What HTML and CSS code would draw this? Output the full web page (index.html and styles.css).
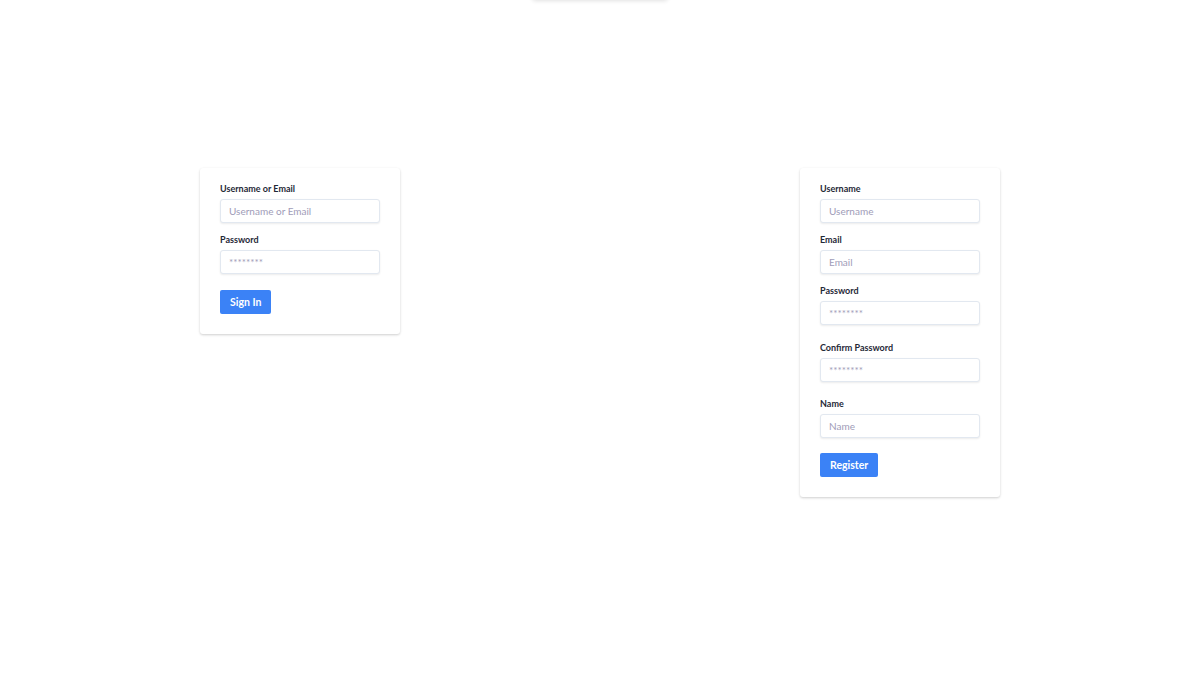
FILE: index.html
```html
<!DOCTYPE html>
<html lang="en">
<head>
<meta charset="utf-8">
<title>Auth</title>
<link rel="stylesheet" href="styles.css">
</head>
<body>
<div class="toast"></div>
<main class="forms">
  <form class="card">
    <div class="field">
      <label class="label">Username or Email</label>
      <input class="input" type="text" placeholder="Username or Email">
    </div>
    <div class="field field-last">
      <label class="label">Password</label>
      <input class="input" type="password" placeholder="********">
    </div>
    <button class="btn" type="button">Sign In</button>
  </form>
  <form class="card">
    <div class="field">
      <label class="label">Username</label>
      <input class="input" type="text" placeholder="Username">
    </div>
    <div class="field">
      <label class="label">Email</label>
      <input class="input" type="text" placeholder="Email">
    </div>
    <div class="field field-last">
      <label class="label">Password</label>
      <input class="input" type="password" placeholder="********">
    </div>
    <div class="field field-spaced">
      <label class="label">Confirm Password</label>
      <input class="input" type="password" placeholder="********">
    </div>
    <div class="field field-spaced">
      <label class="label">Name</label>
      <input class="input" type="text" placeholder="Name">
    </div>
    <button class="btn" type="button">Register</button>
  </form>
</main>
</body>
</html>
```
FILE: styles.css
```css
* { box-sizing: border-box; }
html, body { margin: 0; padding: 0; background: #ffffff; }
body {
  font-family: Lato, "Noto Sans", sans-serif;
  color: #2d3748;
  width: 1200px;
  height: 675px;
  overflow: hidden;
  position: relative;
}
.toast {
  position: absolute;
  top: -40px;
  left: 532px;
  width: 136px;
  height: 40px;
  background: #fff;
  border-radius: 4px;
  box-shadow: 0 1px 4px rgba(0,0,0,0.12);
}
.forms {
  display: flex;
  justify-content: space-around;
  align-items: flex-start;
  padding-top: 168px;
}
.card {
  width: 200px;
  background: #fff;
  border-radius: 3px;
  box-shadow: 0 1px 3px rgba(0,0,0,0.12), 0 1px 2px rgba(0,0,0,0.08);
  padding: 14px 20px 20px;
  margin: 0;
  display: flex;
  flex-direction: column;
}
.field {
  display: flex;
  flex-direction: column;
  margin-bottom: 10px;
}
.field-last { margin-bottom: 16px; }
.field-spaced { margin-bottom: 15px; }
.label {
  font-size: 9px;
  font-weight: 700;
  line-height: 12px;
  padding-top: 1px;
  color: #1f2937;
  margin-bottom: 4px;
}
.input {
  width: 160px;
  height: 24px;
  border: 1px solid #e2e8f0;
  border-radius: 3px;
  box-shadow: 0 1px 2px rgba(0,0,0,0.08);
  padding: 0 8px;
  font-family: Lato, "Noto Sans", sans-serif;
  font-size: 10px;
  color: #4a5568;
  outline: none;
  background: #fff;
}
.input::placeholder { color: #a09cb8; }
.btn {
  align-self: flex-start;
  height: 24px;
  padding: 0 10px;
  background: #3b82f6;
  color: #fff;
  border: none;
  border-radius: 2px;
  font-family: Lato, "Noto Sans", sans-serif;
  font-size: 10.5px;
  font-weight: 700;
  cursor: pointer;
}
```
